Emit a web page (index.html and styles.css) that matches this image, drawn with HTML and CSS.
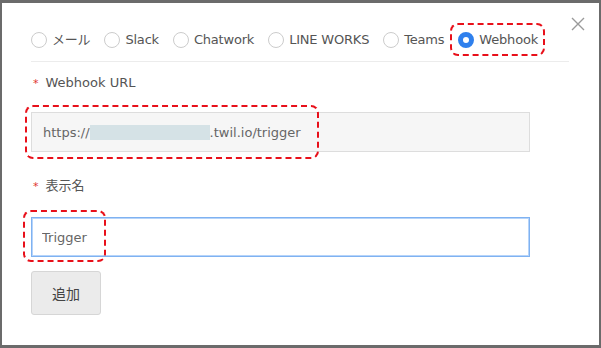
FILE: index.html
```html
<!DOCTYPE html>
<html lang="ja">
<head>
  <meta charset="UTF-8" />
  <title>通知先の追加</title>
  <link rel="stylesheet" href="styles.css">
</head>
<body>
  <div class="dialog">
    <button class="btn-close" aria-label="閉じる">
      <svg viewBox="0 0 14 14" width="14" height="14">
        <path d="M1 1 L13 13 M13 1 L1 13" stroke="#9a9a9a" stroke-width="1.4" fill="none" />
      </svg>
    </button>

    <div class="tipos">
      <label class="tipo"><span class="radio"></span>メール</label>
      <label class="tipo"><span class="radio"></span>Slack</label>
      <label class="tipo"><span class="radio"></span>Chatwork</label>
      <label class="tipo"><span class="radio"></span>LINE WORKS</label>
      <label class="tipo"><span class="radio"></span>Teams</label>
      <label class="tipo marcado"><span class="radio activo"></span>Webhook<span class="marca marca-tipo"></span></label>
    </div>

    <div class="campo campo-url">
      <div class="etiqueta"><span class="req">*</span>Webhook URL</div>
      <div class="caja">
        <div class="entrada entrada-fija">https://<span class="oculto"></span>.twil.io/trigger</div>
        <span class="marca marca-url"></span>
      </div>
    </div>

    <div class="campo campo-nombre">
      <div class="etiqueta"><span class="req">*</span>表示名</div>
      <div class="caja">
        <input class="entrada entrada-foco" type="text" value="Trigger" />
        <span class="marca marca-nombre"></span>
      </div>
    </div>

    <button class="btn-agregar">追加</button>
  </div>
</body>
</html>
```

FILE: styles.css
```css
body {
  margin: 0;
  font-family: 'DejaVu Sans', 'Noto Sans CJK JP', sans-serif;
  font-size: 13px;
  color: #555555;
  background: #ffffff;
}

.dialog {
  position: relative;
  box-sizing: border-box;
  width: 601px;
  height: 348px;
  padding: 0 30px 0 29px;
  border-style: solid;
  border-color: #6b6b6b;
  border-width: 3px 2px 3px 2px;
  background: #ffffff;
}

.btn-close {
  position: absolute;
  top: 14px;
  right: 14px;
  width: 14px;
  height: 14px;
  padding: 0;
  border: none;
  background: none;
  cursor: pointer;
}

.btn-close svg {
  display: block;
}

.tipos {
  display: flex;
  gap: 14px;
  margin-top: 29px;
  padding-bottom: 13px;
  border-bottom: 1px solid #ececec;
}

.tipo {
  position: relative;
  display: flex;
  align-items: center;
  gap: 5px;
  height: 16px;
  line-height: 16px;
  letter-spacing: -0.2px;
  color: #555555;
  cursor: pointer;
}

.radio {
  box-sizing: border-box;
  width: 16px;
  height: 16px;
  border: 1px solid #cccccc;
  border-radius: 50%;
  background: #ffffff;
}

.radio.activo {
  border: 5px solid #2f80ed;
  background: #ffffff;
}

.campo .etiqueta {
  line-height: 20px;
  height: 20px;
  color: #555555;
}

.campo-url .etiqueta {
  margin-top: 11px;
  margin-bottom: 19px;
}

.campo-nombre .etiqueta {
  margin-top: 24px;
  margin-bottom: 21px;
}

.req {
  color: #e0342f;
  font-size: 11px;
  margin-left: 2px;
  margin-right: 7px;
}

.caja {
  position: relative;
  width: 499px;
}

.entrada {
  box-sizing: border-box;
  display: block;
  width: 499px;
  height: 40px;
  padding: 0 11px;
  font-family: 'DejaVu Sans', 'Noto Sans CJK JP', sans-serif;
  font-size: 13px;
  color: #666666;
}

.entrada-fija {
  display: flex;
  align-items: center;
  border: 1px solid #dddddd;
  background: #f6f6f6;
}

.oculto {
  display: inline-block;
  width: 120px;
  height: 15px;
  background: #d5e2e6;
}

.entrada-foco {
  margin: 0;
  padding-left: 10px;
  border: 1px solid #7fb2f1;
  box-shadow: inset 0 0 0 1px #b6d4fa;
  background: #ffffff;
  outline: none;
}

.btn-agregar {
  display: block;
  box-sizing: border-box;
  width: 70px;
  height: 44px;
  margin-top: 14px;
  padding: 0;
  border: 1px solid #d6d6d6;
  border-radius: 3px;
  background: #ebebeb;
  font-family: 'DejaVu Sans', 'Noto Sans CJK JP', sans-serif;
  font-size: 14px;
  color: #444444;
  cursor: pointer;
}

/* marcas rojas de anotación */
.marca {
  position: absolute;
  box-sizing: border-box;
  border: 2px dashed #e8101a;
  border-radius: 8px;
  pointer-events: none;
}

.marca-tipo {
  top: -9px;
  bottom: -8px;
  left: -8px;
  right: -7px;
}

.marca-url {
  top: -7px;
  left: -6px;
  width: 294px;
  height: 54px;
}

.marca-nombre {
  top: -7px;
  left: -8px;
  width: 83px;
  height: 52px;
}
```
